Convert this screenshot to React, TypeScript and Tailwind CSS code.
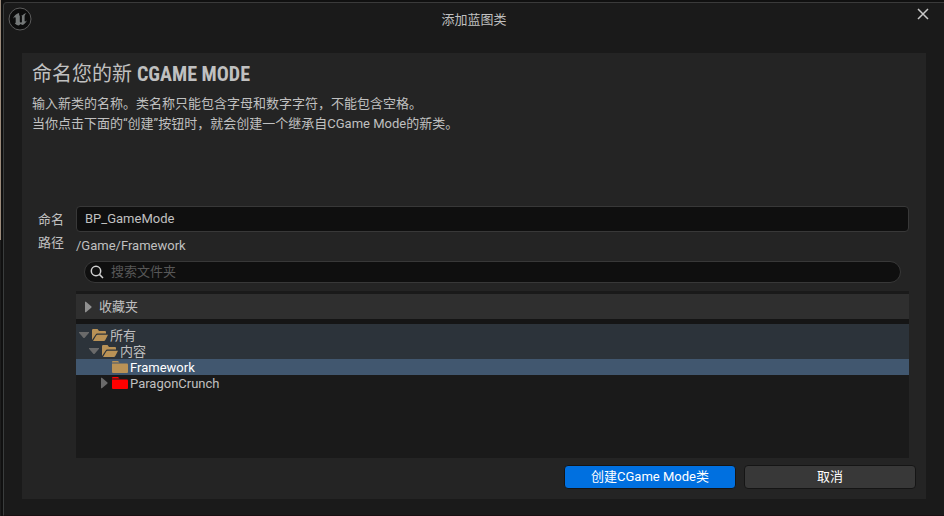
import { useState } from 'react'

type Folder = {
  name: string
  depth: string
  arrow: 'open' | 'closed' | 'none'
  icon: 'open' | 'closed'
  color: string
  row: string
}

const folders: Folder[] = [
  { name: '所有', depth: 'pl-[2px]', arrow: 'open', icon: 'open', color: 'text-[#b99256]', row: 'bg-[#2c333a]' },
  { name: '内容', depth: 'pl-3', arrow: 'open', icon: 'open', color: 'text-[#b99256]', row: 'bg-[#2c333a]' },
  { name: 'Framework', depth: 'pl-[22px]', arrow: 'none', icon: 'closed', color: 'text-[#b99256]', row: 'bg-[#41576f] text-white' },
  { name: 'ParagonCrunch', depth: 'pl-[22px]', arrow: 'closed', icon: 'closed', color: 'text-[#ff0000]', row: '' },
]

function UnrealLogo() {
  return (
    <svg viewBox="0 0 24 24" className="size-6" aria-hidden="true">
      <circle cx="12" cy="12" r="11" fill="#0c0c0c" stroke="#5c5c5c" strokeWidth="1" />
      <path
        d="M11 6C8.300 6.500 6 8.700 4.900 11.800c1-1.200 1.700-1.600 2.200-1.600.4 0 .6.300.6.800v4.300c0 .7-.4 1-1 .9.900 1.300 2.300 2 4.200 2.200l1.700-1.500 1.700 1.200c2-.8 3.700-2.300 4.600-4.900-.8.800-1.400 1.200-1.900 1.200-.300 0-.4-.200-.4-.6V9.200c0-1.200.8-2.200 1.900-3-2 .3-3.200 1.100-4.100 2.300-.300-.300-.5-.4-.9-.4.300.300.4.600.4 1.100v5.700c-.300.500-.700.700-1.200.700-.600 0-.9-.300-.9-1V8.400h-.7c0-1 .200-1.800-.1-2.400z"
        fill="#747878"
      />
    </svg>
  )
}

function CloseIcon() {
  return (
    <svg viewBox="0 0 12 12" className="size-3" fill="none" stroke="#c8c8c8" strokeWidth="1.5" aria-hidden="true">
      <path d="M1 1l10 10M11 1L1 11" />
    </svg>
  )
}

function SearchIcon() {
  return (
    <svg viewBox="0 0 14 14" className="size-[14px] shrink-0" fill="none" stroke="#d0d0d0" strokeWidth="1.5" aria-hidden="true">
      <circle cx="6" cy="6" r="4.700" />
      <path d="M9.400 9.400L13 13" />
    </svg>
  )
}

function Arrow({ state }: { state: Folder['arrow'] }) {
  return (
    <svg viewBox="0 0 12 12" className="size-3 shrink-0" fill="currentColor" aria-hidden="true">
      {state === 'open' && <path d="M1 3h10v.8L6.500 9h-1L1 3.800z" />}
      {state === 'closed' && <path d="M3 .8h.9L9.500 5.500v1L3.900 11.200H3z" />}
    </svg>
  )
}

function FolderIcon({ open, className }: { open: boolean; className: string }) {
  return (
    <svg viewBox="0 0 16 14" className={`h-[14px] w-4 shrink-0 ${className}`} fill="currentColor" aria-hidden="true">
      {open ? (
        <>
          <path d="M0 12V2.200Q0 1 1.200 1h4.300l1.500 2h6q1 0 1 1v1.500H5.200q-1 0-1.500.9z" />
          <path d="M1 13l3.300-5.600q.4-.7 1.200-.7H16l-2.700 5.300q-.5 1-1.500 1z" />
        </>
      ) : (
        <>
          <path d="M0 2.500V1.900Q0 1 1 1h5l1.500 1.500z" />
          <path d="M0 3.500h15q1 0 1 1V12q0 1-1 1H1q-1 0-1-1z" />
        </>
      )}
    </svg>
  )
}

export default function App() {
  const [name, setName] = useState('BP_GameMode')
  const [search, setSearch] = useState('')

  return (
    <div className="flex min-h-screen bg-[#101010] font-[Roboto,'Noto_Sans_CJK_SC',sans-serif] text-[13px] leading-5 text-[#c0c0c0]">
      <div className="flex w-[3px] flex-col" aria-hidden="true">
        <div className="h-60 w-px bg-[#9c8b7b]" />
        <div className="w-px flex-1 bg-[#1c1c1c]" />
      </div>

      <div className="flex flex-1 flex-col pt-[2px]">
        <main className="flex flex-1 flex-col rounded-tl-sm border-t border-b border-l border-t-[#3a3a3a] border-b-[#1a1012] border-l-[#3a3d3d] bg-[#1a1a1a] pr-[18px] pb-4 pl-[18px]">
          <header className="-mx-[18px] grid h-[50px] grid-cols-[1fr_auto_1fr] items-start px-1 pt-1">
            <UnrealLogo />
            <h1 className="pt-[3px]">添加蓝图类</h1>
            <button type="button" aria-label="关闭" className="mt-px mr-[11px] justify-self-end">
              <CloseIcon />
            </button>
          </header>

          <form
            className="flex flex-1 flex-col bg-[#242424] px-[10px] pt-2 pb-[10px]"
            onSubmit={(e) => e.preventDefault()}
          >
            <h2 className="text-[20px] leading-[26px]">
              命名您的新{' '}
              <span className="font-['Roboto_Condensed','Liberation_Sans_Narrow',sans-serif] font-bold">
                CGAME MODE
              </span>
            </h2>
            <div className="mt-[7px] min-h-28">
              <p>输入新类的名称。类名称只能包含字母和数字字符，不能包含空格。</p>
              <p>当你点击下面的“创建”按钮时，就会创建一个继承自CGame Mode的新类。</p>
            </div>

            <div className="grid flex-1 grid-cols-[38px_1fr] grid-rows-[26px_1fr] pr-[7px] pl-[6px]">
              <label htmlFor="class-name" className="pt-1">
                命名
              </label>
              <input
                id="class-name"
                type="text"
                value={name}
                onChange={(e) => setName(e.target.value)}
                className="h-[26px] w-full rounded border border-[#383838] bg-[#0f0f0f] px-2 pb-[2px] outline-none"
              />
              <span className="pt-px">路径</span>
              <div className="flex flex-col pt-1">
                <div>/Game/Framework</div>
                <label className="mx-2 mt-[5px] flex h-[22px] items-center gap-[7px] rounded-full border border-[#383838] bg-[#0f0f0f] px-[5px]">
                  <SearchIcon />
                  <input
                    type="text"
                    aria-label="搜索文件夹"
                    placeholder="搜索文件夹"
                    value={search}
                    onChange={(e) => setSearch(e.target.value)}
                    className="w-full outline-none placeholder:text-[#575757]"
                  />
                </label>

                <button
                  type="button"
                  className="mt-2 flex h-7 items-center gap-[5px] border-t-[3px] border-[#1a1a1a] bg-[#2f2f2f] px-[6px]"
                >
                  <span className="text-[#909090]">
                    <Arrow state="closed" />
                  </span>
                  <span className="pt-px">收藏夹</span>
                </button>

                <div className="flex flex-1 flex-col border-t-[5px] border-[#151515] bg-[#1a1a1a]">
                  <ul role="tree" aria-label="文件夹">
                    {folders.map((f, i) => (
                      <li
                        key={f.name}
                        role="treeitem"
                        className={`flex items-center leading-4 ${i === 0 ? 'pt-[3px]' : ''} ${f.depth} ${f.row}`}
                      >
                        <span className="mr-[2px] text-[#6a6a6a]">
                          <Arrow state={f.arrow} />
                        </span>
                        <FolderIcon open={f.icon === 'open'} className={f.color} />
                        <span className="ml-[2px] pt-[2px] leading-[14px]">{f.name}</span>
                      </li>
                    ))}
                  </ul>
                </div>
              </div>
            </div>

            <div className="mt-[7px] flex justify-end gap-2 text-white">
              <button type="submit" className="h-6 w-[172px] rounded border border-[#151515] bg-[#0070e0]">
                创建CGame Mode类
              </button>
              <button type="button" className="h-6 w-[172px] rounded border border-[#151515] bg-[#383838]">
                取消
              </button>
            </div>
          </form>
        </main>
      </div>
    </div>
  )
}
